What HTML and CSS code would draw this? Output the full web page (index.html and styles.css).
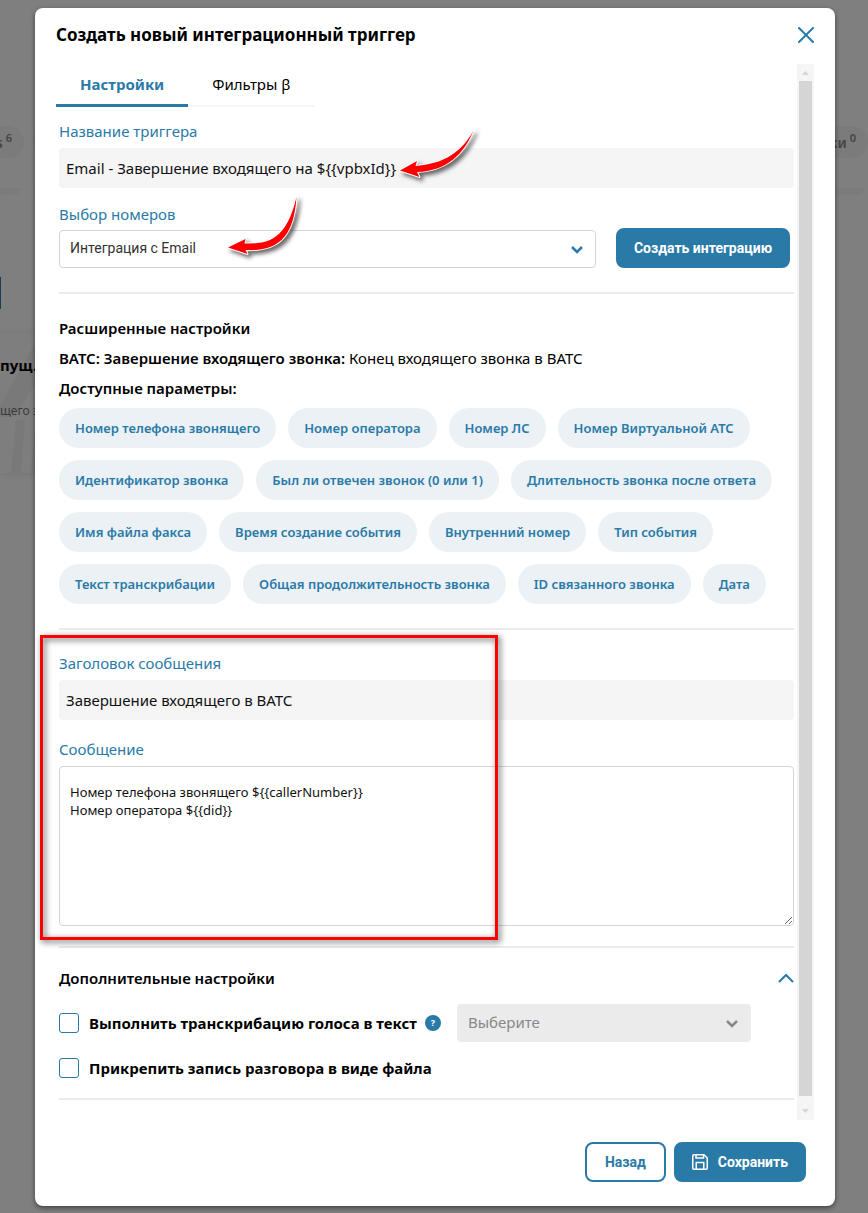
FILE: index.html
```
<!DOCTYPE html>
<html lang="ru">
<head>
    <meta charset="UTF-8">
    <meta name="viewport" content="width=device-width, initial-scale=1">
    <title>Создать новый интеграционный триггер</title>
    <link rel="stylesheet" href="styles.css">
</head>
<body>
    <!-- Страница под модальным окном -->
    <div class="page" aria-hidden="true">
        <div class="page-tabs">
            <span class="page-tab">s<sup>6</sup></span>
            <span class="page-tab wide"></span>
            <span class="page-tab last">ки<sup>0</sup></span>
        </div>
        <div class="page-strips">
            <div class="page-strip"></div>
            <div class="page-strip wide"></div>
        </div>
        <div class="page-btn"></div>
        <div class="page-card">
            <svg class="page-card-bg" width="36" height="140" viewBox="0 0 36 140">
                <path d="M0 73 L34 12 H36 V50 L14 84 H0Z M16 87 H25 L21 140 H11Z M36 90 L30 140 H36Z" fill="#f3f3f3"/>
            </svg>
            <div class="page-card-title">пущ.</div>
            <div class="page-card-text">щего з</div>
        </div>
    </div>

    <div class="overlay">
        <div class="modal" role="dialog" aria-labelledby="modalTitle">
            <div class="modal-header">
                <h1 id="modalTitle">Создать новый интеграционный триггер</h1>
                <button class="close-btn" aria-label="Закрыть">
                    <svg width="16" height="16" viewBox="0 0 16 16" fill="none" stroke="currentColor" stroke-width="2" stroke-linecap="round">
                        <path d="M1 1 L15 15 M15 1 L1 15"/>
                    </svg>
                </button>
            </div>

            <div class="modal-body">
                <div class="content">
                    <div class="tabs">
                        <button class="tab active">Настройки</button>
                        <button class="tab">Фильтры β</button>
                    </div>

                    <form class="form">
                        <div class="field">
                            <label for="triggerName">Название триггера</label>
                            <input type="text" id="triggerName" value="Email - Завершение входящего на ${{vpbxId}}">
                            <svg class="arrow arrow-name" width="100" height="70" viewBox="0 0 100 70">
                                <path d="M10 50.500 L27 41 L25.500 46 C48 44 69 37 83.500 10.500 C74 34 57 51 27 52 L29.500 57Z"/>
                            </svg>
                        </div>

                        <div class="field">
                            <label for="integration">Выбор номеров</label>
                            <div class="integration-row">
                                <div class="select-box">
                                    <select id="integration">
                                        <option>Интеграция с Email</option>
                                    </select>
                                    <svg class="chevron" width="12" height="8" viewBox="0 0 12 8" fill="none" stroke="currentColor" stroke-width="2.500">
                                        <path d="M1 1 L6 6 L11 1"/>
                                    </svg>
                                </div>
                                <button type="button" class="btn btn-primary">Создать интеграцию</button>
                            </div>
                            <svg class="arrow arrow-select" width="90" height="75" viewBox="0 0 90 75">
                                <path d="M8 57.500 L25.500 49 L24.500 53.500 C46 54 66 52 76.500 7 C74 44 61 62 25.500 60 L27.500 64Z"/>
                            </svg>
                        </div>

                        <hr>

                        <div class="params">
                            <h2>Расширенные настройки</h2>
                            <p><b>ВАТС: Завершение входящего звонка:</b> Конец входящего звонка в ВАТС</p>
                            <h2>Доступные параметры:</h2>
                            <div class="chips">
                                <button type="button" class="chip">Номер телефона звонящего</button>
                                <button type="button" class="chip">Номер оператора</button>
                                <button type="button" class="chip">Номер ЛС</button>
                                <button type="button" class="chip">Номер Виртуальной АТС</button>
                                <button type="button" class="chip">Идентификатор звонка</button>
                                <button type="button" class="chip">Был ли отвечен звонок (0 или 1)</button>
                                <button type="button" class="chip">Длительность звонка после ответа</button>
                                <button type="button" class="chip">Имя файла факса</button>
                                <button type="button" class="chip">Время создание события</button>
                                <button type="button" class="chip">Внутренний номер</button>
                                <button type="button" class="chip">Тип события</button>
                                <button type="button" class="chip">Текст транскрибации</button>
                                <button type="button" class="chip">Общая продолжительность звонка</button>
                                <button type="button" class="chip">ID связанного звонка</button>
                                <button type="button" class="chip">Дата</button>
                            </div>
                        </div>

                        <hr>

                        <div class="message">
                            <div class="field">
                                <label for="subject">Заголовок сообщения</label>
                                <input type="text" id="subject" value="Завершение входящего в ВАТС">
                            </div>
                            <div class="field">
                                <label for="message">Сообщение</label>
                                <textarea id="message">Номер телефона звонящего ${{callerNumber}}
Номер оператора ${{did}}</textarea>
                            </div>
                            <div class="highlight"></div>
                        </div>

                        <hr>

                        <div class="extra">
                            <div class="extra-header">
                                <h2>Дополнительные настройки</h2>
                                <button type="button" class="toggle-btn" aria-label="Свернуть">
                                    <svg width="16" height="10" viewBox="0 0 16 10" fill="none" stroke="currentColor" stroke-width="2">
                                        <path d="M1 9 L8 2 L15 9"/>
                                    </svg>
                                </button>
                            </div>
                            <div class="check-row tall">
                                <input type="checkbox" id="transcribe">
                                <label for="transcribe">Выполнить транскрибацию голоса в текст</label>
                                <span class="help">?</span>
                                <div class="select-box disabled">
                                    <select aria-label="Выберите" disabled>
                                        <option>Выберите</option>
                                    </select>
                                    <svg class="chevron" width="12" height="8" viewBox="0 0 12 8" fill="none" stroke="currentColor" stroke-width="2.500">
                                        <path d="M1 1 L6 6 L11 1"/>
                                    </svg>
                                </div>
                            </div>
                            <div class="check-row">
                                <input type="checkbox" id="attach">
                                <label for="attach">Прикрепить запись разговора в виде файла</label>
                            </div>
                        </div>

                        <hr>
                    </form>
                </div>

                <div class="scrollbar">
                    <svg width="17" height="17" viewBox="0 0 17 17"><path d="M5 11 L8.500 7 L12 11Z" fill="#d5d5d5"/></svg>
                    <div class="thumb"></div>
                    <svg width="17" height="17" viewBox="0 0 17 17"><path d="M5 6 L8.500 10 L12 6Z" fill="#d5d5d5"/></svg>
                </div>
            </div>

            <div class="modal-footer">
                <button class="btn btn-outline">Назад</button>
                <button class="btn btn-primary">
                    <svg width="16" height="16" viewBox="0 0 16 16" fill="none" stroke="currentColor" stroke-width="1.500">
                        <path d="M2 0.750 H12 L15.250 4 V14 Q15.250 15.250 14 15.250 H2 Q0.750 15.250 0.750 14 V2 Q0.750 0.750 2 0.750Z"/>
                        <path d="M4 1 V4 H11.500 V1 M4.250 15 V8.500 H11.750 V15"/>
                    </svg>
                    Сохранить
                </button>
            </div>
        </div>
    </div>
</body>
</html>
```
FILE: styles.css
```
* {
    box-sizing: border-box;
}
body {
    margin: 0;
    display: grid;
    min-height: 100vh;
    background: #fff;
    color: #000;
    font-family: 'Noto Sans', 'Open Sans', sans-serif;
    font-size: 15px;
    line-height: 20px;
}
button, input, select, textarea {
    font-family: inherit;
}
h1, h2, p {
    margin: 0;
}
hr {
    height: 2px;
    margin: 0;
    border: none;
    background: #ebebeb;
}

/* Страница и затемнение лежат в одной ячейке */
.page, .overlay {
    grid-area: 1 / 1;
    min-width: 0;
}
.page {
    overflow: hidden;
    padding-top: 126px;
}
.page-tabs {
    display: flex;
    gap: 9px;
    height: 32px;
}
.page-tab {
    display: flex;
    justify-content: flex-end;
    width: 24px;
    padding: 7px 12px 0 0;
    border-radius: 0 16px 16px 0;
    background: #f6f6f6;
    color: #888;
    font-size: 14px;
    font-weight: 600;
}
.page-tab sup {
    margin-left: 3px;
    font-size: 11px;
    line-height: 10px;
}
.page-tab.wide {
    flex: 1;
    border-radius: 16px;
}
.page-tab.last {
    width: 56px;
    border-radius: 16px;
}
.page-strips {
    display: flex;
    gap: 12px;
    margin-top: 30px;
    padding-right: 3px;
}
.page-strip {
    width: 21px;
    height: 7px;
    border-radius: 0 0 16px 0;
    background: #f6f6f6;
}
.page-strip.wide {
    flex: 1;
    border-radius: 0 0 16px 16px;
}
.page-btn {
    width: 1px;
    height: 32px;
    margin-top: 82px;
    background: #2a7aa8;
}
.page-card {
    position: relative;
    width: 50%;
    height: 140px;
    margin-top: 24px;
    padding-top: 22px;
    background: #fcfcfc;
    box-shadow: 0 1px 8px rgba(0,0,0,0.1);
}
.page-card-bg {
    position: absolute;
    top: 0;
    left: 0;
}
.page-card-title {
    position: relative;
    font-weight: bold;
}
.page-card-text {
    position: relative;
    margin-top: 26px;
    color: #777;
    font-size: 12px;
}

/* Модальное окно */
.overlay {
    position: relative;
    padding: 8px 33px 7px 35px;
    background: rgba(0,0,0,0.5);
}
.modal {
    padding: 0 21px 24px;
    border-radius: 8px;
    background: #fff;
    box-shadow: 0 2px 5px rgba(0,0,0,0.5);
}
.modal-header {
    display: flex;
    justify-content: space-between;
    align-items: center;
    height: 56px;
    padding-bottom: 3px;
}
h1 {
    font-size: 17px;
    font-weight: bold;
}
.close-btn, .toggle-btn {
    display: flex;
    padding: 0;
    border: none;
    background: none;
    color: #2a7aa8;
    cursor: pointer;
}
.modal-body {
    display: flex;
    gap: 3px;
}
.content {
    flex: 1;
    min-width: 0;
    padding-bottom: 20px;
}
.tabs {
    display: flex;
    align-items: flex-end;
    height: 43px;
}
.tab {
    height: 43px;
    padding: 0 24px 1px;
    border: none;
    border-bottom: 2px solid #f5f5f5;
    background: none;
    font-size: 15px;
    cursor: pointer;
}
.tab.active {
    border-bottom: 3px solid #2a7aa8;
    color: #2a7aa8;
    font-weight: bold;
}
.form {
    padding: 14px 0 0 3px;
}

.field {
    position: relative;
    display: flex;
    flex-direction: column;
}
.field label {
    margin-bottom: 7px;
    color: #2a7aa8;
}
.field + .field {
    margin-top: 16px;
}
input[type=text] {
    width: 100%;
    height: 40px;
    padding: 0 7px;
    border: none;
    border-radius: 4px;
    background: #f5f5f5;
    color: #111;
    font-size: 15px;
}
.integration-row {
    display: flex;
    align-items: flex-end;
    gap: 20px;
    margin-top: -3px;
    padding-right: 4px;
}
.select-box {
    position: relative;
    flex: 1;
    color: #2a7aa8;
}
.select-box select {
    display: block;
    width: 100%;
    height: 38px;
    padding: 0 36px 2px 10px;
    border: 1px solid #d5d5d5;
    border-radius: 4px;
    appearance: none;
    background: #fff;
    color: #333;
    font-family: Roboto, sans-serif;
    font-size: 14px;
}
.chevron {
    position: absolute;
    top: 16px;
    right: 13px;
}
.btn {
    display: flex;
    justify-content: center;
    align-items: center;
    gap: 10px;
    height: 40px;
    padding: 0 18px;
    border: 2px solid #2a7aa8;
    border-radius: 8px;
    font-family: Roboto, sans-serif;
    font-size: 14px;
    font-weight: bold;
    cursor: pointer;
}
.btn-primary {
    padding: 0 16px;
    background: #2a7aa8;
    color: #fff;
}
.btn-outline {
    background: #fff;
    color: #2a7aa8;
}
.field + hr, .params + hr {
    margin-top: 24px;
}

.params {
    padding-top: 19px;
    line-height: 30px;
}
h2, .params b {
    font-size: 15px;
    font-weight: 600;
}
.chips {
    display: flex;
    flex-wrap: wrap;
    gap: 12px;
    margin-top: 5px;
}
.chip {
    height: 40px;
    padding: 0 16px;
    border: none;
    border-radius: 20px;
    background: #ebf1f4;
    color: #2a7aa8;
    font-size: 13px;
    font-weight: 600;
    cursor: pointer;
}

.message {
    position: relative;
    padding: 23px 0 20px;
}
.message .field + .field {
    margin-top: 19px;
}
textarea {
    width: 100%;
    height: 160px;
    padding: 16px 10px;
    border: 1px solid #d5d5d5;
    border-radius: 4px;
    color: #111;
    font-size: 13px;
    line-height: 18px;
    resize: vertical;
}

/* Выделение и стрелки поверх формы */
.highlight {
    position: absolute;
    top: 5px;
    bottom: 6px;
    left: -19px;
    width: 458px;
    border: 3px solid #f00;
    filter: drop-shadow(2px 2px 3px rgba(0,0,0,0.7));
    pointer-events: none;
}
.arrow {
    position: absolute;
    fill: #f00;
    stroke: #fff;
    stroke-width: 2px;
    stroke-linejoin: round;
    paint-order: stroke;
    filter: drop-shadow(3px 3px 2px rgba(0,0,0,0.6));
    pointer-events: none;
}
.arrow-name {
    top: -1px;
    left: 331px;
}
.arrow-select {
    top: -14px;
    left: 161px;
}

.extra {
    padding: 20px 0;
}
.extra-header {
    display: flex;
    justify-content: space-between;
    align-items: center;
}
.check-row {
    display: flex;
    align-items: center;
    margin-top: 16px;
}
.check-row.tall {
    height: 38px;
}
.check-row label {
    font-weight: bold;
}
input[type=checkbox] {
    width: 20px;
    height: 20px;
    margin: 0 10px 0 0;
    border: 1px solid #2a7aa8;
    border-radius: 3px;
    appearance: none;
    background: #fff;
}
.help {
    width: 16px;
    height: 16px;
    margin-left: 8px;
    border-radius: 50%;
    background: #2a7aa8;
    color: #fff;
    font-size: 9px;
    font-weight: bold;
    line-height: 16px;
    text-align: center;
}
.select-box.disabled {
    margin: 0 43px 0 16px;
    color: #888;
}
.select-box.disabled select {
    border-color: #ebebeb;
    background: #ebebeb;
    color: #888;
    font-family: inherit;
    font-size: 15px;
    opacity: 1;
}

.scrollbar {
    display: flex;
    flex-direction: column;
    width: 17px;
    background: #f5f5f5;
}
.thumb {
    flex: 1;
    margin: 0 2px 7px;
    background: #d5d5d5;
}
.modal-footer {
    display: flex;
    justify-content: flex-end;
    gap: 8px;
    padding: 22px 8px 0 0;
}
```
